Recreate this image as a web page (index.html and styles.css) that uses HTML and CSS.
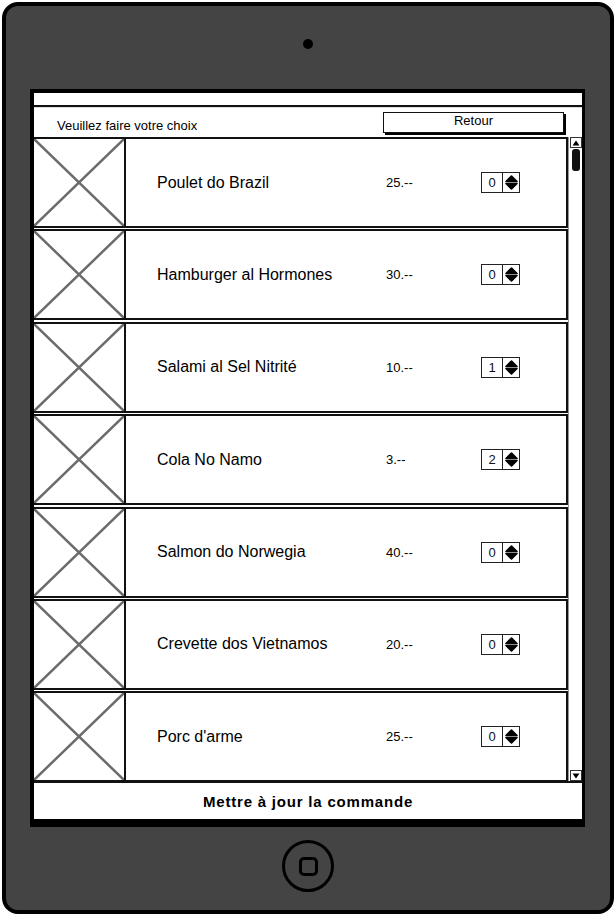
FILE: index.html
```html
<!DOCTYPE html>
<html lang="fr">
<head>
<meta charset="utf-8">
<title>Commande</title>
<link rel="stylesheet" href="styles.css">
</head>
<body>
<div class="device">
  <div class="camera"></div>
  <div class="screen">
    <div class="addr"></div>
    <div class="header">
      <span class="prompt">Veuillez faire votre choix</span>
      <button class="retour">Retour</button>
    </div>
    <div class="list">
      <div class="rows">
        <div class="row"><div class="ph"><svg viewBox="0 0 100 100" preserveAspectRatio="none"><line x1="0" y1="0" x2="100" y2="100"/><line x1="100" y1="0" x2="0" y2="100"/></svg></div><span class="name">Poulet do Brazil</span><span class="price">25.--</span><div class="spin"><span class="num">0</span><span class="arr"><svg viewBox="0 0 13 15"><path d="M6.5 1 L12 6.5 L1 6.5 Z"/><path d="M1 8.5 L12 8.5 L6.5 14 Z"/></svg></span></div></div>
        <div class="row"><div class="ph"><svg viewBox="0 0 100 100" preserveAspectRatio="none"><line x1="0" y1="0" x2="100" y2="100"/><line x1="100" y1="0" x2="0" y2="100"/></svg></div><span class="name">Hamburger al Hormones</span><span class="price">30.--</span><div class="spin"><span class="num">0</span><span class="arr"><svg viewBox="0 0 13 15"><path d="M6.5 1 L12 6.5 L1 6.5 Z"/><path d="M1 8.5 L12 8.5 L6.5 14 Z"/></svg></span></div></div>
        <div class="row"><div class="ph"><svg viewBox="0 0 100 100" preserveAspectRatio="none"><line x1="0" y1="0" x2="100" y2="100"/><line x1="100" y1="0" x2="0" y2="100"/></svg></div><span class="name">Salami al Sel Nitrité</span><span class="price">10.--</span><div class="spin"><span class="num">1</span><span class="arr"><svg viewBox="0 0 13 15"><path d="M6.5 1 L12 6.5 L1 6.5 Z"/><path d="M1 8.5 L12 8.5 L6.5 14 Z"/></svg></span></div></div>
        <div class="row"><div class="ph"><svg viewBox="0 0 100 100" preserveAspectRatio="none"><line x1="0" y1="0" x2="100" y2="100"/><line x1="100" y1="0" x2="0" y2="100"/></svg></div><span class="name">Cola No Namo</span><span class="price">3.--</span><div class="spin"><span class="num">2</span><span class="arr"><svg viewBox="0 0 13 15"><path d="M6.5 1 L12 6.5 L1 6.5 Z"/><path d="M1 8.5 L12 8.5 L6.5 14 Z"/></svg></span></div></div>
        <div class="row"><div class="ph"><svg viewBox="0 0 100 100" preserveAspectRatio="none"><line x1="0" y1="0" x2="100" y2="100"/><line x1="100" y1="0" x2="0" y2="100"/></svg></div><span class="name">Salmon do Norwegia</span><span class="price">40.--</span><div class="spin"><span class="num">0</span><span class="arr"><svg viewBox="0 0 13 15"><path d="M6.5 1 L12 6.5 L1 6.5 Z"/><path d="M1 8.5 L12 8.5 L6.5 14 Z"/></svg></span></div></div>
        <div class="row"><div class="ph"><svg viewBox="0 0 100 100" preserveAspectRatio="none"><line x1="0" y1="0" x2="100" y2="100"/><line x1="100" y1="0" x2="0" y2="100"/></svg></div><span class="name">Crevette dos Vietnamos</span><span class="price">20.--</span><div class="spin"><span class="num">0</span><span class="arr"><svg viewBox="0 0 13 15"><path d="M6.5 1 L12 6.5 L1 6.5 Z"/><path d="M1 8.5 L12 8.5 L6.5 14 Z"/></svg></span></div></div>
        <div class="row"><div class="ph"><svg viewBox="0 0 100 100" preserveAspectRatio="none"><line x1="0" y1="0" x2="100" y2="100"/><line x1="100" y1="0" x2="0" y2="100"/></svg></div><span class="name">Porc d'arme</span><span class="price">25.--</span><div class="spin"><span class="num">0</span><span class="arr"><svg viewBox="0 0 13 15"><path d="M6.5 1 L12 6.5 L1 6.5 Z"/><path d="M1 8.5 L12 8.5 L6.5 14 Z"/></svg></span></div></div>
      </div>
      <div class="scrollbar">
        <div class="sbtn"><svg viewBox="0 0 8 6"><path d="M4 0.5 L7.5 5.5 L0.5 5.5 Z"/></svg></div>
        <div class="thumb"></div>
        <div class="track"></div>
        <div class="sbtn"><svg viewBox="0 0 8 6"><path d="M0.5 0.5 L7.5 0.5 L4 5.5 Z"/></svg></div>
      </div>
    </div>
    <div class="footer">Mettre à jour la commande</div>
  </div>
  <div class="home"><div class="home-sq"></div></div>
</div>
</body>
</html>
```

FILE: styles.css
```css
html, body {
  margin: 0;
  padding: 0;
  background: #ffffff;
}
body {
  font-family: "Liberation Sans", Arial, sans-serif;
  color: #000;
}
.device {
  box-sizing: border-box;
  margin: 2px;
  width: 612px;
  height: 912px;
  border: 4px solid #000;
  border-radius: 16px;
  background: #444444;
  display: flex;
  flex-direction: column;
  align-items: center;
}
.camera {
  width: 10px;
  height: 10px;
  border-radius: 50%;
  background: #000;
  margin-top: 33px;
  margin-bottom: 40px;
}
.screen {
  align-self: flex-start;
  margin-left: 24px;
  box-sizing: border-box;
  width: 555px;
  height: 738px;
  border-style: solid;
  border-color: #000;
  border-width: 4px 3px 8px 4px;
  background: #fff;
  display: flex;
  flex-direction: column;
}
.addr {
  height: 12px;
  border-bottom: 2px solid #111;
  flex: none;
}
.header {
  height: 30px;
  flex: none;
  display: flex;
  align-items: center;
  justify-content: space-between;
  border-top: 1px solid #ddd;
  box-sizing: border-box;
}
.prompt {
  font-size: 13px;
  padding-left: 23px;
  padding-top: 5px;
}
.retour {
  font-family: "Liberation Sans", Arial, sans-serif;
  font-size: 13px;
  color: #000;
  width: 181px;
  height: 21px;
  margin-right: 18px;
  margin-top: -1px;
  padding: 0 0 3px;
  background: #fff;
  border: 1.5px solid #111;
  box-shadow: 2px 2px 0 #000;
  border-radius: 0;
}
.list {
  flex: 1;
  display: flex;
  overflow: hidden;
  min-height: 0;
}
.rows {
  width: 534px;
  flex: none;
  display: flex;
  flex-direction: column;
  gap: 1.4px;
  overflow: hidden;
}
.row {
  box-sizing: border-box;
  flex: none;
  height: 91px;
  border-top: 2px solid #111;
  border-bottom: 2px solid #111;
  border-right: 2px solid #111;
  display: flex;
  align-items: center;
}
.ph {
  box-sizing: border-box;
  width: 92px;
  height: 100%;
  border-right: 2px solid #111;
  flex: none;
  display: flex;
}
.ph svg {
  width: 100%;
  height: 100%;
  display: block;
}
.ph line {
  stroke: #6b6b6b;
  stroke-width: 2.5px;
  vector-effect: non-scaling-stroke;
}
.name {
  font-size: 16px;
  margin-left: 31px;
  width: 229px;
  flex: none;
  white-space: nowrap;
}
.price {
  font-size: 13px;
  width: 95px;
  flex: none;
}
.spin {
  display: flex;
  box-sizing: border-box;
  height: 21px;
  width: 39px;
  border: 1.5px solid #222;
  flex: none;
}
.num {
  box-sizing: border-box;
  width: 21px;
  border-right: 1.5px solid #222;
  font-size: 13px;
  display: flex;
  align-items: center;
  justify-content: center;
  color: #111;
}
.arr {
  flex: 1;
  display: flex;
  align-items: center;
  justify-content: center;
}
.arr svg {
  width: 13px;
  height: 15px;
  display: block;
}
.arr path {
  fill: #000;
  stroke: #000;
  stroke-width: 1.6;
  stroke-linejoin: round;
}
.scrollbar {
  flex: 1;
  display: flex;
  flex-direction: column;
  align-items: center;
  border-left: 1px solid #999;
}
.sbtn {
  box-sizing: border-box;
  width: 12px;
  height: 11px;
  border: 1px solid #333;
  display: flex;
  align-items: center;
  justify-content: center;
  flex: none;
  background: #fff;
}
.sbtn svg {
  width: 8px;
  height: 6px;
  display: block;
}
.sbtn path {
  fill: #000;
}
.thumb {
  width: 8px;
  height: 22px;
  margin-top: 1px;
  border-radius: 3px;
  background: #111;
  flex: none;
}
.track {
  flex: 1;
}
.footer {
  flex: none;
  height: 38px;
  box-sizing: border-box;
  border-top: 2px solid #111;
  display: flex;
  align-items: center;
  justify-content: center;
  font-size: 15px;
  font-weight: bold;
  letter-spacing: 0.8px;
}
.home {
  box-sizing: border-box;
  margin-top: 13px;
  width: 52px;
  height: 52px;
  border: 3px solid #000;
  border-radius: 50%;
  display: flex;
  align-items: center;
  justify-content: center;
}
.home-sq {
  box-sizing: border-box;
  width: 19px;
  height: 19px;
  border: 3px solid #000;
  border-radius: 5px;
}
```
